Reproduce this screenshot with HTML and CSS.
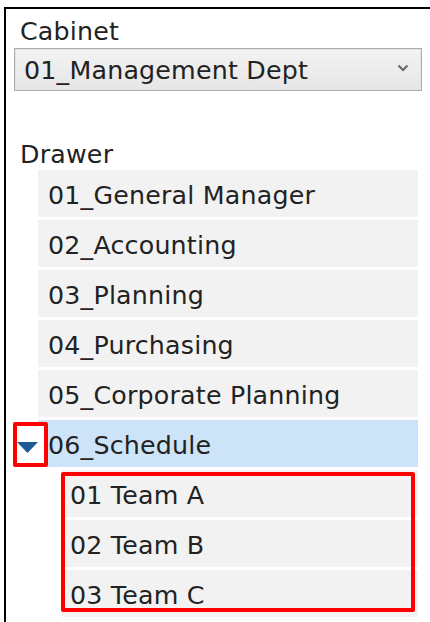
FILE: index.html
```html
<!DOCTYPE html>
<html lang="en">
<head>
<meta charset="utf-8">
<title>Cabinet</title>
<link rel="stylesheet" href="styles.css">
</head>
<body>
<div class="panel">
  <div class="field-label">Cabinet</div>
  <div class="select">
    <span class="select-value">01_Management Dept</span>
    <svg class="chevron" width="12" height="8" viewBox="0 0 12 8"><path d="M1.5 1.5 L6 6 L10.5 1.5" fill="none" stroke="#6a6a6a" stroke-width="2.2"/></svg>
  </div>

  <div class="field-label drawer-label">Drawer</div>
  <div class="tree">
    <div class="item">01_General Manager</div>
    <div class="item">02_Accounting</div>
    <div class="item">03_Planning</div>
    <div class="item">04_Purchasing</div>
    <div class="item">05_Corporate Planning</div>
    <div class="item item-open">
      <span class="toggle"><svg width="21" height="11" viewBox="0 0 21 11"><path d="M0 0 H21 L10.5 11 Z" fill="#1d5a95"/></svg></span>
      06_Schedule
    </div>
    <div class="children">
      <div class="item child">01 Team A</div>
      <div class="item child">02 Team B</div>
      <div class="item child">03 Team C</div>
      <span class="mark"></span>
    </div>
  </div>
</div>
</body>
</html>
```

FILE: styles.css
```css
html, body {
  margin: 0;
  padding: 0;
  background: #fff;
  overflow: hidden;
}

body {
  font-family: "DejaVu Sans", Verdana, sans-serif;
  font-size: 25.3px;
  letter-spacing: 0.2px;
  color: #222;
}

.panel {
  margin: 7px 0 0 4px;
  border-top: 2px solid #000;
  border-left: 2px solid #000;
  height: 613px;
  overflow: hidden;
}

.field-label {
  padding: 8px 0 0 14px;
  line-height: 29px;
}

.drawer-label {
  margin-top: 48px;
  padding-top: 1px;
}

.select {
  margin: 2px 0 0 8px;
  width: 408px;
  height: 43px;
  box-sizing: border-box;
  border: 1px solid #acacac;
  box-shadow: inset 0 0 0 1px #e4e4e4;
  background: linear-gradient(#f3f3f3, #e6e6e6);
  display: flex;
  align-items: center;
  justify-content: space-between;
  padding: 0 12px 0 9px;
}

.select-value {
  line-height: 41px;
  padding-top: 1px;
}

.chevron {
  margin-bottom: 4px;
}

.tree {
  margin: 1px 0 0 32px;
  width: 380px;
  display: flex;
  flex-direction: column;
  gap: 3px;
}

.item {
  position: relative;
  height: 47px;
  box-sizing: border-box;
  padding: 4px 0 0 10px;
  line-height: 43px;
  background: #f2f2f2;
  white-space: nowrap;
}

.item-open {
  background: #cde3f7;
}

.toggle {
  position: absolute;
  left: -25px;
  top: 2px;
  width: 35px;
  height: 45px;
  box-sizing: border-box;
  border: 4px solid #ff0000;
  border-radius: 2px;
  background: #fff;
  padding: 16px 0 0 0;
  line-height: 0;
}

.children {
  position: relative;
  margin-left: 24px;
  display: flex;
  flex-direction: column;
  gap: 3px;
}

.child {
  padding-left: 8px;
}

.mark {
  position: absolute;
  left: -1px;
  top: 2px;
  width: 354px;
  height: 140px;
  box-sizing: border-box;
  border: 4px solid #ff0000;
  border-radius: 2px;
}
```
